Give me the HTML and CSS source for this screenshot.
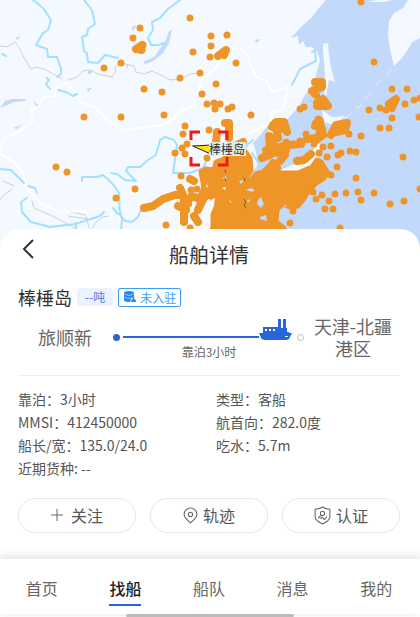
FILE: index.html
```
<!DOCTYPE html>
<html lang="zh-CN">

<head>
    <meta charset="utf-8">
    <meta name="viewport" content="width=device-width, initial-scale=1">
    <title>船舶详情</title>
    <link rel="stylesheet" href="styles.css">
</head>

<body>
    <svg class="map" viewBox="0 0 420 250" preserveAspectRatio="xMidYMin slice" role="img" aria-label="船舶位置">
        <!-- sea -->
        <path class="sea" d="M326 0L318 9 312 17 300 28 291 38 298 36 299 45 303 41 306 47 312 47 317 51 320 60 316 75 314 82 305 95 298 108 290 116 270 123 262 133 253 143 256 152 258 165 246 180 232 182 240 250H420V0Z" />
        <!-- peninsulas and islands -->
        <path class="land" d="M408 0L403 8 394 13 389 21 388 35 390 50 394 66 402 58 409 48 412 42 420 38V0ZM323 44L323 50 324 62 325 78 326 86 324 95 325 100 327 90 329 80 335 82 331 68 329 55 328 43ZM318 142L322 147 320 156 312 165 298 173 282 176 282 169 298 163 310 155ZM367 2L377 0 392 0 384 2ZM322 110L332 117 345 116 335 125 324 122ZM270 123L290 116 283 126 276 132 268 134Z" />
        <path class="isles" d="M391 69L386 75M382 79L376 85M371 93L365 100M362 105L357 108M352 113L345 118 339 124" />
        <path class="sea" d="M172 30L169 31 166 40 159 50 154 57 143 62 146 64 153 61 163 53 169 43ZM126 65L128 64 127 71ZM88 71L92 71 91 74 88 74ZM132 27L137 25 133 31ZM255 40L261 39 256 43ZM0 108L5 101 12 99 25 99 26 101 14 102 5 106ZM33 101L38 105 39 110ZM13 128L22 125 17 129ZM15 38L20 36 18 40ZM87 89L93 87 88 92Z" />
        <!-- borders -->
        <path class="border" d="M0 46L7 47 15 42 20 49 24 58 31 69 36 67 44 69 53 74 62 79M68 80L77 77 83 71 90 70 98 74 112 77 116 71 115 67 121 63 134 66 136 72 144 74 152 71 163 76 170 80 181 79 190 74 200 73M32 201L34 208 50 215 68 224 78 230M70 212L86 215 89 228M68 216L88 219M92 229L96 222 103 217 110 216M0 200L5 194 12 189M3 181L14 186" />
        <path class="border-light" d="M68 82L56 88 55 96 42 98 40 106 31 110 33 121 22 130 5 138 0 150M0 153L14 162 23 173 26 187 40 203 60 212 85 211 88 216M66 84L77 93 80 102 96 108 108 121 123 130 158 126 172 120 180 111 193 106 202 79 216 68 225 50 238 48 246 53 256 77 267 81 272 92 288 87 283 109 272 113 270 124 248 133M110 216L118 208 119 222" />
        <!-- rivers -->
        <path class="river" d="M33 0L43 8 51 20 48 30 43 33 36 45 47 49 48 57 57 57 61 69 61 74 57 77M84 0L92 10 95 24 88 29 87 35 82 37 84 51 87 53 88 62 98 63 105 55 118 58M180 0L168 9 160 18 152 22 153 30 148 38 151 45 158 45 164 43M47 78L49 80 46 84 50 89M58 90L66 92 73 96 77 94M2 54L6 56M292 85L300 69 308 65 316 61 315 50 312 52M0 169L11 170 24 183M28 186L35 188 37 193M27 198L21 202 22 212 31 222 50 227 75 224 100 216 104 212M82 181V177L97 177 103 175 112 183 119 193 120 215 125 221 132 222 138 217 142 208M111 173L117 174 125 180 136 181 126 171 128 167 140 167 148 160 156 155 160 140 165 137 174 140 177 145 173 173 190 173 203 168 207 160M119 208L122 219 121 230M76 223V230M113 208L118 214M253 140L248 144 243 151M252 153L258 162 260 171" />
        <!-- ship density -->
        <path class="mass" d="M203 182L201 172 206 169 214 170 216 162 224 159 232 151 244 150 250 158 251 170 245 179 251 180 256 174 263 172 270 165 277 173 286 173 298 173 312 167 317 160 321 162 328 173 323 179 315 184 307 193 303 200 298 206 290 207 282 204 277 210 276 222 284 228 284 240H212L213 224 213 198 207 196 200 207 198 198 204 190Z" />
        <path class="mass-line" d="M144 208L153 206 163 199 175 195 182 195M180 188L184 197 186 210 178 206M181 193L188 204 182 206M184 199L184 222M184 205L192 196 200 199 205 190 205 178 213 173M206 193L198 210M194 216L198 222M190 179L194 181M272 127L276 122 284 122 287 132M273 125L280 129M276 128L278 138M286 128L281 125M269 136L270 148 275 138M262 158L270 155 273 147 280 154 288 145 301 144M270 147L286 150M276 148L286 145M266 150L275 153M280 161L285 155M273 163L277 168M297 161L304 160 311 154M316 123L320 121 321 129 318 138 307 139M315 126L322 128 323 135 316 140M331 135L336 125 347 123 345 130 332 133M338 127L342 130M225 123H229V138M217 132L216 143M235 146L243 142M237 154L245 158M315 82H322V87L312 91 316 95M317 103L323 99 328 106 317 106M320 103L324 106M389 104L396 99 392 108M136 49L142 45 141 50M218 56L226 50 224 55" />
        <path class="dots" d="M190 18h0M140 28h0M133 38h0M136 49h0M143 45h0M142 50h0M104 68h0M121 63h0M193 52h0M180 78h0M200 73h0M144 89h0M162 92h0M84 117h0M121 117h0M164 115h0M202 94h0M207 104h0M361 2h0M211 36h0M227 35h0M211 46h0M210 57h0M236 63h0M216 84h0M214 103h0M220 104h0M215 109h0M228 109h0M232 107h0M251 115h0M374 62h0M392 89h0M407 89h0M300 109h0M304 107h0M369 110h0M380 108h0M386 110h0M405 104h0M414 100h0M420 98h0M392 118h0M419 117h0M318 119h0M56 167h0M67 172h0M135 189h0M116 198h0M185 126h0M183 134h0M187 144h0M182 148h0M185 154h0M175 153h0M181 176h0M166 225h0M207 158h0M380 128h0M389 128h0M361 136h0M349 134h0M306 134h0M403 157h0M356 178h0M337 167h0M327 157h0M331 146h0M314 144h0M323 147h0M319 153h0M338 155h0M341 153h0M350 151h0M356 152h0M331 175h0M313 192h0M322 195h0M335 194h0M329 201h0M346 193h0M358 192h0M361 200h0M374 193h0M390 204h0M404 201h0M420 189h0M325 209h0M333 209h0M316 199h0M293 211h0M290 223h0M340 228h0M191 190h0M197 189h0M190 228h0M209 130h0M286 142h0M292 145h0M300 141h0" />
        <!-- gaps in the crowd -->
        <path class="gap" d="M222 178L226 176 227 180ZM239 181L244 180 241 184ZM246 190L251 188 255 190 252 192ZM258 200L261 197 264 204 261 208 257 204ZM260 217L266 215 267 221 260 219ZM246 202L249 199 250 202ZM283 206L287 205 286 207Z" />
        <path class="gap-land" d="M215 198L214 206 208 219 204 214 205 207 211 200ZM222 188L226 187 225 190ZM229 199L232 203 230 202ZM206 184L208 186 207 188Z" />
        <path class="marks" d="M225 170L226 173M225 178L226 181M244 178L245 181M244 199L246 202 244 205 246 208" />
        <!-- selected ship -->
        <path class="bracket" d="M200 132H191V140M218 132H227V140M200 165H191V157M218 165H227V157" />
        <path class="arrow" d="M193 146L212 145 214 155Z" />
        <rect class="label-bg" x="209" y="142" width="37" height="14" />
        <text class="label" x="209" y="154">棒棰岛</text>
    </svg>

    <main class="sheet">
        <header class="sheet-header">
            <button class="back" type="button" aria-label="返回">
                <svg width="12" height="20" viewBox="0 0 12 20"><path d="M11 1L2 10l9 9" /></svg>
            </button>
            <h1>船舶详情</h1>
        </header>

        <div class="ship-title">
            <h2>棒棰岛</h2>
            <span class="tag">--吨</span>
            <span class="badge">
                <svg width="14" height="12" viewBox="0 0 14 12">
                    <path d="M1 2Q1 0 6 0T11 2V5Q9 5 8 8L7 11Q1 11 1 9Z" />
                    <path d="M8 11Q8 8 10 8 8 5 10 5T11 8Q13 8 13 11Z" />
                    <path class="badge-cut" d="M1 3Q6 6 11 3M1 6Q4 8 8 7" />
                </svg>
                未入驻
            </span>
        </div>

        <section class="route">
            <div class="port">旅顺新</div>
            <div class="track">
                <div class="track-bar">
                    <span class="start"></span>
                    <span class="line"></span>
                    <svg class="vessel" width="34" height="22" viewBox="0 0 34 22">
                        <path d="M19 0h3v9h-3zM24 0h3v9h-3zM4 8h15v1h9v4h2v1H4zM0 14h33l-3 6q-1 1-3 1H6q-3 0-4-2z" />
                        <path class="vessel-cut" d="M6 10h2v2H6zM10 10h2v2h-2zM14 10h2v2h-2zM26 17h3v1h-3z" />
                    </svg>
                    <span class="end"></span>
                </div>
                <div class="track-note">靠泊3小时</div>
            </div>
            <div class="port dest">天津-北疆港区</div>
        </section>

        <dl class="info">
            <div><dt>靠泊：</dt><dd>3小时</dd></div>
            <div><dt>类型：</dt><dd>客船</dd></div>
            <div><dt>MMSI：</dt><dd>412450000</dd></div>
            <div><dt>航首向：</dt><dd>282.0度</dd></div>
            <div><dt>船长/宽：</dt><dd>135.0/24.0</dd></div>
            <div><dt>吃水：</dt><dd>5.7m</dd></div>
            <div><dt>近期货种:</dt><dd>&nbsp;--</dd></div>
        </dl>

        <div class="actions">
            <button type="button">
                <svg class="plus" width="12" height="12" viewBox="0 0 12 12"><path d="M6 0v12M0 6h12" /></svg>
                关注
            </button>
            <button type="button">
                <svg width="15" height="17" viewBox="0 0 14 16">
                    <path d="M7 15C4 12 1 10 1 7a6 6 0 0 1 12 0C13 10 10 12 7 15Z" />
                    <circle cx="7" cy="7" r="2" />
                </svg>
                轨迹
            </button>
            <button type="button">
                <svg width="17" height="19" viewBox="0 0 16 18">
                    <path d="M8 1Q11 3 15 3V10Q15 14 8 17 1 14 1 10V3Q5 3 8 1Z" />
                    <circle cx="8" cy="7" r="2" />
                    <path d="M4 12Q5 9 8 9M6 12Q8 10 9 12T12 10" />
                </svg>
                认证
            </button>
        </div>
    </main>

    <nav class="tabs">
        <a href="#home">首页</a>
        <a href="#find" class="active" aria-current="page">找船</a>
        <a href="#fleet">船队</a>
        <a href="#message">消息</a>
        <a href="#mine">我的</a>
    </nav>
    <div class="home-indicator"></div>
</body>

</html>
```

FILE: styles.css
```
* {
    box-sizing: border-box;
    margin: 0;
    padding: 0;
}

body {
    display: flex;
    flex-direction: column;
    min-height: 100vh;
    background: #fff;
    color: #555;
    font-family: "Noto Sans CJK SC", sans-serif;
    font-size: 14px;
}

button {
    background: none;
    border: 0;
    color: inherit;
    font: inherit;
    cursor: pointer;
}

/* map */
.map {
    display: block;
    flex: none;
    width: 100%;
    height: 250px;
    background: #f3f9ff;
}

.map path {
    stroke-linecap: round;
    stroke-linejoin: round;
}

.sea,
.gap {
    fill: #c3d9fb;
}

.land,
.gap-land {
    fill: #f3f9ff;
}

.isles,
.border,
.border-light,
.river,
.mass-line,
.dots,
.marks,
.bracket {
    fill: none;
}

.isles {
    stroke: #e6f0fe;
    stroke-width: 1px;
}

.border {
    stroke: #ced2d7;
    stroke-width: 1px;
}

.border-light {
    stroke: #fff;
    stroke-width: 2px;
}

.river {
    stroke: #a3e0ff;
    stroke-width: 2px;
}

.mass {
    fill: #ef9528;
    stroke: #ef9528;
    stroke-width: 5px;
}

.mass-line,
.dots {
    stroke: #ef9528;
    stroke-width: 7px;
}

.mass-line {
    stroke-width: 8px;
}

.marks {
    stroke: #77613c;
    stroke-width: 1px;
}

.map .bracket {
    stroke: #f01818;
    stroke-width: 3px;
    stroke-linecap: butt;
    stroke-linejoin: miter;
}

.arrow {
    fill: #ffe01a;
    stroke: #222;
    stroke-width: 1px;
}

.label-bg {
    fill: #e3f1f3;
    opacity: 0.9;
}

.label {
    fill: #333;
    font-size: 12px;
}

/* detail sheet */
.sheet {
    position: relative;
    flex: 1;
    margin-top: -21px;
    padding: 10px 20px 26px 18px;
    background: #fff;
    border-radius: 20px 20px 0 0;
}

.sheet-header {
    display: grid;
    grid-template-columns: 16px 1fr 16px;
    align-items: center;
}

.back {
    height: 24px;
    margin-bottom: 8px;
    text-align: right;
}

.back svg {
    display: inline-block;
    fill: none;
    stroke: #333;
    stroke-width: 2px;
}

h1 {
    color: #333;
    font-size: 20px;
    font-weight: 400;
    line-height: 32px;
    text-align: center;
}

.ship-title {
    display: flex;
    align-items: center;
    gap: 5px;
    margin-top: 13px;
}

h2 {
    color: #333;
    font-size: 18px;
    font-weight: 400;
    line-height: 26px;
}

.tag {
    padding: 0 8px;
    background: #e8f3fe;
    border-radius: 4px;
    color: #5577dd;
    font-size: 12px;
    line-height: 18px;
}

.badge {
    display: flex;
    align-items: center;
    gap: 3px;
    padding: 0 4px;
    border: 1px solid #3d9cf5;
    border-radius: 2px;
    color: #3d9cf5;
    font-size: 12px;
    line-height: 17px;
}

.badge svg {
    fill: #2389ee;
}

.badge .badge-cut {
    fill: none;
    stroke: #8cc4f9;
    stroke-width: 1px;
}

.route {
    display: flex;
    align-items: center;
    padding: 4px 0 15px;
    border-bottom: 1px solid #eee;
}

.port {
    width: 94px;
    color: #666;
    font-size: 18px;
    line-height: 22px;
    text-align: center;
}

.dest {
    padding: 0 4px;
}

.track {
    flex: 1;
    padding-top: 16px;
}

.track-bar {
    display: flex;
    align-items: center;
    height: 14px;
}

.start {
    width: 7px;
    height: 7px;
    margin: 0 3px 0 1px;
    background: #2864dc;
    border-radius: 50%;
}

.line {
    flex: 1;
    height: 2px;
    background: #2864dc;
}

.vessel {
    align-self: flex-end;
    margin-bottom: 3px;
    fill: #2864dc;
}

.vessel-cut {
    fill: #fff;
}

.end {
    width: 7px;
    height: 7px;
    margin: 0 2px 0 4px;
    border: 1px solid #bbb;
    border-radius: 50%;
}

.track-note {
    color: #666;
    font-size: 12px;
    line-height: 16px;
    text-align: center;
}

.info {
    display: grid;
    grid-template-columns: 198px 1fr;
    padding: 12px 0 18px;
    line-height: 23px;
}

.info div {
    display: flex;
}

.actions {
    display: grid;
    grid-template-columns: repeat(3, 1fr);
    gap: 14px;
}

.actions button {
    display: flex;
    align-items: center;
    justify-content: center;
    gap: 5px;
    height: 35px;
    padding-bottom: 1px;
    border: 1px solid #e6e6e6;
    border-radius: 18px;
    font-size: 16px;
}

.actions svg {
    fill: none;
    stroke: #666;
    stroke-width: 1px;
}

.actions .plus {
    margin-right: 3px;
}

/* bottom tabs */
.tabs {
    position: relative;
    display: grid;
    grid-template-columns: repeat(5, 1fr);
    justify-items: center;
    padding: 16px 2px 8px 0;
    background: #fff;
    box-shadow: 0 -2px 10px #ddd;
}

.tabs a {
    padding-bottom: 3px;
    border-bottom: 2px solid transparent;
    color: #666;
    font-size: 16px;
    line-height: 26px;
    text-decoration: none;
}

.tabs .active {
    border-color: #2864dc;
    color: #222;
    font-weight: 500;
}

.home-indicator {
    position: relative;
    width: 40%;
    height: 3px;
    margin: 0 auto;
    background: #bbb;
    border-radius: 2px;
}
```
